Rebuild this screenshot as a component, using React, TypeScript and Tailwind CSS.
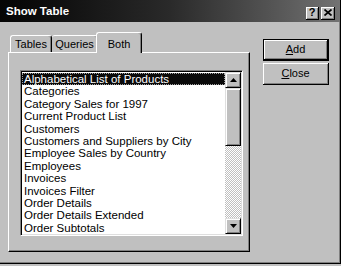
import React from "react";

const items = [
  "Alphabetical List of Products",
  "Categories",
  "Category Sales for 1997",
  "Current Product List",
  "Customers",
  "Customers and Suppliers by City",
  "Employee Sales by Country",
  "Employees",
  "Invoices",
  "Invoices Filter",
  "Order Details",
  "Order Details Extended",
  "Order Subtotals",
];

function ScrollBtn({ down }: { down?: boolean }) {
  return (
    <div className="w-[16px] h-[16px] bg-[#c0c0c0] border-t border-l border-[#dfdfdf] border-r border-b border-r-black border-b-black shadow-[inset_1px_1px_#fff,inset_-1px_-1px_#808080] flex items-center justify-center">
      <svg width="7" height="4" viewBox="0 0 7 4">
        {down ? (
          <polygon points="0,0 7,0 3.5,4" fill="#000" />
        ) : (
          <polygon points="3.5,0 7,4 0,4" fill="#000" />
        )}
      </svg>
    </div>
  );
}

export default function App() {
  return (
    <div className="w-[341px] h-[266px] bg-[#c0c0c0] overflow-hidden font-['Liberation_Sans',Arial,sans-serif] text-black">
      <div className="w-[341px] h-[264px] border-r border-b border-black shadow-[inset_-1px_-1px_#808080] flex flex-col">
        {/* Title bar */}
        <div className="h-[22px] flex items-center pt-[2px] pl-[6px] pr-[5px] bg-gradient-to-r from-[#050505] via-[#2a2a2a] to-[#737373]">
          <span className="text-white font-bold text-[11.5px] leading-none">Show Table</span>
          <div className="ml-auto flex gap-[2px] mt-[2px]">
            <div className="w-[13px] h-[13px] bg-[#c0c0c0] border-r border-b border-black shadow-[inset_1px_1px_#fff,inset_-1px_-1px_#808080] flex items-center justify-center">
              <span className="font-bold text-[11px] leading-none">?</span>
            </div>
            <div className="w-[14px] h-[13px] bg-[#c0c0c0] border-r border-b border-black shadow-[inset_1px_1px_#fff,inset_-1px_-1px_#808080] flex items-center justify-center">
              <svg width="8" height="7" viewBox="0 0 8 7">
                <path d="M0.5 0.5 L7.5 6.5 M7.5 0.5 L0.5 6.5" stroke="#000" strokeWidth="1.7" />
              </svg>
            </div>
          </div>
        </div>
        {/* Body */}
        <div className="flex pl-[8px] pt-[10px]">
          <div className="flex flex-col w-[242px]">
            <div className="flex items-end h-[20px] pl-[2px] text-[11px]">
              <div className="w-[42px] h-[17px] border-l border-t border-white border-r border-r-black rounded-t-[3px] shadow-[inset_-1px_0_#808080] flex items-center justify-center pt-[1px]">
                Tables
              </div>
              <div className="w-[46px] h-[17px] border-t border-white border-r border-r-black rounded-t-[3px] shadow-[inset_-1px_0_#808080] flex items-center justify-center pt-[1px]">
                Queries
              </div>
              <div className="relative z-10 -ml-[2px] mb-[-1px] w-[46px] h-[21px] bg-[#c0c0c0] border-l border-t border-white border-r border-r-black rounded-t-[3px] shadow-[inset_-1px_0_#808080] flex items-start justify-center pt-[3px]">
                Both
              </div>
            </div>
            <div className="h-[200px] border-t border-l border-white border-r border-b border-r-black border-b-black shadow-[inset_-1px_-1px_#808080] pl-[11px] pt-[17px]">
              <div className="w-[223px] h-[166px] border-t border-l border-[#808080] border-r border-b border-r-white border-b-white shadow-[inset_1px_1px_#000,inset_-1px_-1px_#dfdfdf] p-[1px] flex">
                <div className="flex-1 bg-white pt-[1px] overflow-hidden text-[11.5px]">
                  {items.map((it, i) => (
                    <div
                      key={it}
                      className={
                        i === 0
                          ? "h-[12.4px] leading-[10.4px] pl-[1px] bg-[#0a0a0a] text-white border border-dotted border-[#a0a0a0] whitespace-nowrap"
                          : "h-[12.4px] leading-[12.4px] pl-[2px] whitespace-nowrap"
                      }
                    >
                      {it}
                    </div>
                  ))}
                </div>
                <div className="w-[16px] flex flex-col">
                  <ScrollBtn />
                  <div className="h-[58px] bg-[#c0c0c0] border-t border-l border-[#dfdfdf] border-r border-b border-r-black border-b-black shadow-[inset_1px_1px_#fff,inset_-1px_-1px_#808080]" />
                  <div className="flex-1 bg-[conic-gradient(#fff_25%,#c0c0c0_0_50%,#fff_0_75%,#c0c0c0_0)] bg-[length:2px_2px]" />
                  <ScrollBtn down />
                </div>
              </div>
            </div>
          </div>
          {/* Buttons */}
          <div className="ml-[13px] mt-[7px] flex flex-col gap-[2px] text-[11px]">
            <div className="w-[66px] h-[22px] border border-black">
              <div className="w-full h-full border-r border-b border-black shadow-[inset_1px_1px_#fff,inset_-1px_-1px_#808080] flex items-center justify-center">
                <span>
                  <span className="underline">A</span>dd
                </span>
              </div>
            </div>
            <div className="w-[66px] h-[22px] border-r border-b border-black shadow-[inset_1px_1px_#fff,inset_-1px_-1px_#808080] flex items-center justify-center">
              <span>
                <span className="underline">C</span>lose
              </span>
            </div>
          </div>
        </div>
      </div>
    </div>
  );
}
